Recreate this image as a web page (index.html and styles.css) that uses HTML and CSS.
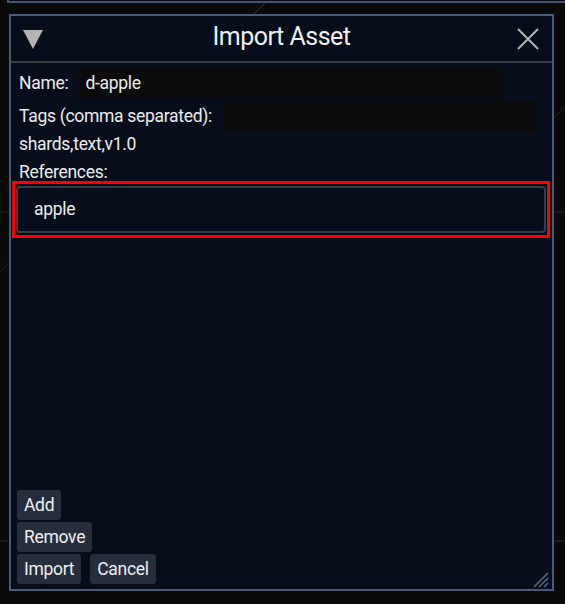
FILE: index.html
```html
<!DOCTYPE html>
<html>
<head>
<meta charset="utf-8">
<link rel="stylesheet" href="styles.css">
</head>
<body>
<div class="backdrop">
  <svg class="bg-lines" width="565" height="604" viewBox="0 0 565 604">
    <line x1="252" y1="16" x2="268" y2="0" stroke="#2a2a2a" stroke-width="1"/>
    <line x1="0" y1="541" x2="9" y2="541" stroke="#2a2a2a" stroke-width="1"/>
    <line x1="554" y1="541" x2="565" y2="541" stroke="#2a2a2a" stroke-width="1"/>
    <line x1="0" y1="212" x2="9" y2="212" stroke="#222" stroke-width="1"/>
    <line x1="554" y1="212" x2="565" y2="212" stroke="#222" stroke-width="1"/>
    <line x1="0" y1="272" x2="9" y2="262" stroke="#222" stroke-width="1"/>
    <line x1="554" y1="118" x2="565" y2="106" stroke="#222" stroke-width="1"/>
  </svg>
  <div class="behind"></div>
  <div class="dialog">
    <div class="titlebar">
      <svg class="collapse" width="20" height="19" viewBox="0 0 20 19"><polygon points="0,0 20,0 10,19" fill="#b4b4b4"/></svg>
      <div class="title">Import Asset</div>
      <svg class="close" width="24" height="24" viewBox="0 0 24 24"><path d="M2 2 L22 22 M22 2 L2 22" stroke="#b8b8b8" stroke-width="1.8" fill="none"/></svg>
    </div>
    <div class="content">
      <div class="row">
        <span class="label">Name:</span>
        <div class="field name-field">d-apple</div>
      </div>
      <div class="row">
        <span class="label">Tags (comma separated):</span>
        <div class="field tags-field"></div>
      </div>
      <div class="line first">shards,text,v1.0</div>
      <div class="line">References:</div>
      <div class="highlight">
        <div class="ref-box">apple</div>
      </div>
      <div class="buttons">
        <div class="btn-row"><span class="btn">Add</span></div>
        <div class="btn-row"><span class="btn">Remove</span></div>
        <div class="btn-row"><span class="btn">Import</span><span class="btn">Cancel</span></div>
      </div>
    </div>
    <svg class="grip" width="16" height="16" viewBox="0 0 16 16">
      <path d="M1 15 L15 1 M6 15 L15 6 M11 15 L15 11" stroke="#56647e" stroke-width="1.6" fill="none"/>
    </svg>
  </div>
</div>
</body>
</html>
```
FILE: styles.css
```css
html, body {
  margin: 0;
  padding: 0;
  background: #0a0a0a;
  font-family: Roboto, "Liberation Sans", sans-serif;
  color: #ececec;
}
.backdrop {
  position: relative;
  width: 565px;
  height: 604px;
  overflow: hidden;
}
.bg-lines {
  position: absolute;
  left: 0;
  top: 0;
}
.behind {
  position: relative;
  margin-left: 7px;
  height: 1px;
  background: #070d1b;
  border-left: 2px solid #45536d;
  border-bottom: 2px solid #45536d;
}
.dialog {
  position: relative;
  margin: 11px 0 0 9px;
  width: 541px;
  height: 573px;
  background: #070d1b;
  border: 2px solid #4b5a77;
  display: flex;
  flex-direction: column;
}
.titlebar {
  height: 45px;
  border-bottom: 2px solid #3c3f47;
  display: grid;
  grid-template-columns: 1fr auto 1fr;
  align-items: center;
  padding: 0 12px 0 12px;
}
.collapse {
  margin-top: 1px;
  justify-self: start;
}
.title {
  font-size: 25px;
  letter-spacing: -0.5px;
  color: #f0f0f0;
  margin-top: -4px;
}
.close {
  margin-top: 1px;
  justify-self: end;
}
.content {
  flex: 1;
  display: flex;
  flex-direction: column;
  padding: 5px 2px 5px 8px;
  font-size: 17.5px;
  letter-spacing: -0.3px;
}
.row {
  display: flex;
  align-items: center;
  height: 30px;
  margin-bottom: 3px;
}
.label {
  margin-right: 10px;
}
.field {
  height: 30px;
  background: #0b0b0b;
  line-height: 30px;
  padding-left: 7px;
  box-sizing: border-box;
}
.name-field {
  width: 424px;
}
.tags-field {
  width: 312px;
  margin-left: 2px;
}
.line {
  height: 28px;
  line-height: 28px;
}
.line.first {
  margin-top: -4px;
}
.highlight {
  box-sizing: border-box;
  margin: -5px 0 0 -7px;
  width: 538px;
  height: 57px;
  border: 3px solid #ff0000;
  padding: 2px 1px;
  background: #050a14;
}
.ref-box {
  height: 47px;
  box-sizing: border-box;
  border: 2px solid #383c46;
  border-radius: 4px;
  background: #070d1b;
  line-height: 43px;
  padding-left: 16px;
}
.buttons {
  margin-top: auto;
  display: flex;
  flex-direction: column;
  gap: 2px;
  margin-left: -2px;
}
.btn-row {
  display: flex;
  gap: 9px;
}
.btn {
  display: inline-block;
  height: 30px;
  line-height: 30px;
  padding: 0 7px;
  background: #262e3d;
  border-radius: 3px;
  color: #f0f0f0;
}
.grip {
  position: absolute;
  right: 3px;
  bottom: 1px;
}
```
